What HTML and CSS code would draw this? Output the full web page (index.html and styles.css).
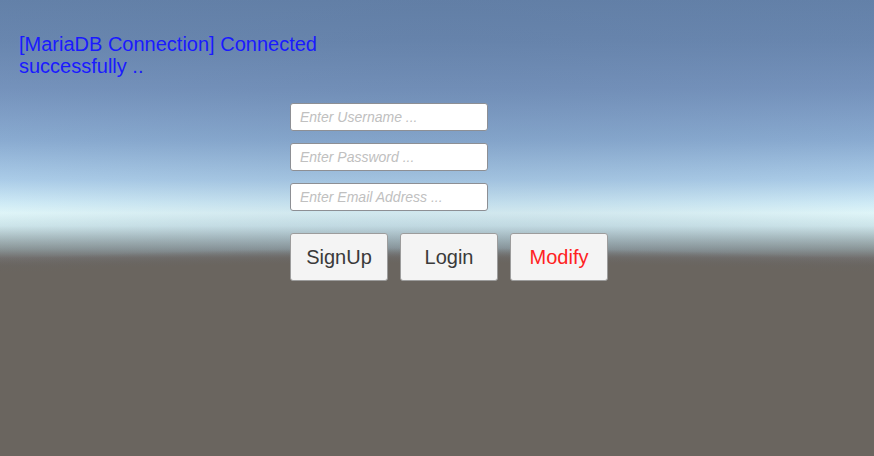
FILE: index.html
```html
<!DOCTYPE html>
<html>
<head>
<meta charset="utf-8">
<link rel="stylesheet" href="styles.css">
</head>
<body>
<div class="scene">
  <div class="status">[MariaDB Connection] Connected<br>successfully ..</div>
  <div class="form">
    <div class="field"><span class="placeholder">Enter Username ...</span></div>
    <div class="field"><span class="placeholder">Enter Password ...</span></div>
    <div class="field"><span class="placeholder">Enter Email Address ...</span></div>
    <div class="buttons">
      <div class="btn">SignUp</div>
      <div class="btn">Login</div>
      <div class="btn btn-red">Modify</div>
    </div>
  </div>
</div>
</body>
</html>
```

FILE: styles.css
```css
html, body {
  margin: 0;
  padding: 0;
}
body {
  width: 874px;
  height: 456px;
  overflow: hidden;
  font-family: "Liberation Sans", Arial, sans-serif;
}
.scene {
  width: 874px;
  height: 456px;
  box-sizing: border-box;
  padding-top: 33px;
  background:
    radial-gradient(ellipse 2000px 420px at 50% 668px, #6a655f 0, #6a655f 96.4%, rgba(106,101,95,0.7) 97.6%, rgba(106,101,95,0) 100%),
    radial-gradient(ellipse 700px 500px at 50% 0, rgba(92,118,155,0.3), rgba(92,118,155,0) 100%),
    linear-gradient(to bottom, #6482aa 0px, #6a88b1 40px, #7896c0 90px, #8eb0d6 140px, #b2d4ef 180px, #d8f4fd 203px, #e9ffff 213px, #d4ecef 226px, #adbfc1 238px, #8d9797 249px, #736f6b 258px, #6a655f 266px, #6a645f 456px);
}
.status {
  margin-left: 19px;
  color: #1a1aff;
  font-size: 20px;
  line-height: 22px;
}
.form {
  margin-left: 290px;
  margin-top: 26px;
  display: flex;
  flex-direction: column;
  gap: 12px;
  width: 318px;
}
.field {
  width: 198px;
  height: 28px;
  box-sizing: border-box;
  background: #ffffff;
  border: 1px solid #8d8f94;
  border-radius: 3px;
  padding-left: 9px;
  display: flex;
  align-items: center;
}
.placeholder {
  font-style: italic;
  font-size: 14px;
  color: #c0c0c0;
}
.buttons {
  margin-top: 10px;
  display: flex;
  gap: 12px;
}
.btn {
  width: 98px;
  height: 48px;
  box-sizing: border-box;
  background: #f4f4f4;
  border: 1px solid #9c9c9c;
  border-radius: 3px;
  display: flex;
  align-items: center;
  justify-content: center;
  font-size: 20px;
  color: #3a3a3a;
}
.btn-red {
  color: #ff2222;
}
```
